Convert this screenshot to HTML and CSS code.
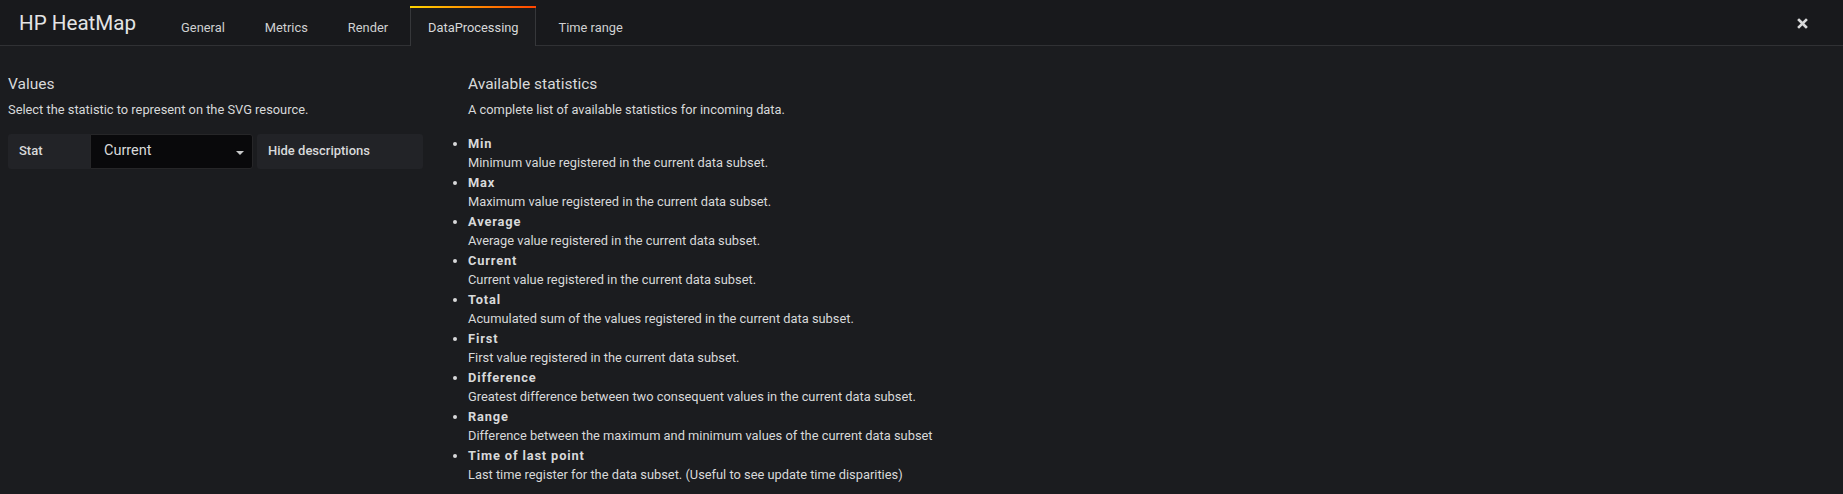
FILE: index.html
```html
<!DOCTYPE html>
<html lang="en">
<head>
<meta charset="utf-8">
<title>HP HeatMap</title>
<link rel="stylesheet" href="styles.css">
</head>
<body>
<div class="editor">
  <header class="tabs-header">
    <h2 class="title">HP HeatMap</h2>
    <ul class="tabs">
      <li class="tab">General</li>
      <li class="tab">Metrics</li>
      <li class="tab">Render</li>
      <li class="tab active">DataProcessing</li>
      <li class="tab">Time range</li>
    </ul>
    <button class="close" aria-label="Close">
      <svg width="11" height="11" viewBox="0 0 11 11"><path d="M2 2 L9 9 M9 2 L2 9" stroke="#d8d9da" stroke-width="2.6" stroke-linecap="square" fill="none"/></svg>
    </button>
  </header>
  <div class="content">
    <section class="group values">
      <h5 class="section-heading">Values</h5>
      <p class="section-desc">Select the statistic to represent on the SVG resource.</p>
      <div class="form-row">
        <span class="form-label">Stat</span>
        <div class="select">
          <span class="select-value">Current</span>
          <span class="caret"></span>
        </div>
        <span class="form-label wide">Hide descriptions</span>
      </div>
    </section>
    <section class="group stats">
      <h5 class="section-heading">Available statistics</h5>
      <p class="section-desc">A complete list of available statistics for incoming data.</p>
      <ul class="stat-list">
        <li><strong>Min</strong><span>Minimum value registered in the current data subset.</span></li>
        <li><strong>Max</strong><span>Maximum value registered in the current data subset.</span></li>
        <li><strong>Average</strong><span>Average value registered in the current data subset.</span></li>
        <li><strong>Current</strong><span>Current value registered in the current data subset.</span></li>
        <li><strong>Total</strong><span>Acumulated sum of the values registered in the current data subset.</span></li>
        <li><strong>First</strong><span>First value registered in the current data subset.</span></li>
        <li><strong>Difference</strong><span>Greatest difference between two consequent values in the current data subset.</span></li>
        <li><strong>Range</strong><span>Difference between the maximum and minimum values of the current data subset</span></li>
        <li><strong>Time of last point</strong><span>Last time register for the data subset. (Useful to see update time disparities)</span></li>
      </ul>
    </section>
  </div>
</div>
</body>
</html>
```

FILE: styles.css
```css
* { box-sizing: border-box; }
html, body {
  margin: 0;
  padding: 0;
  background: #1b1c1f;
  color: #d8d9da;
  font-family: Roboto, "Liberation Sans", sans-serif;
  font-size: 12.85px;
  line-height: 1.5;
}
.editor { min-height: 494px; }
.tabs-header {
  display: flex;
  align-items: flex-end;
  height: 46px;
  background: #18191c;
  border-bottom: 1px solid #303134;
}
.title {
  margin: 0 0 0 19px;
  align-self: center;
  font-size: 20.6px;
  font-weight: 400;
  line-height: 1;
  color: #e3e4e5;
  padding-top: 1px;
}
.tabs {
  display: flex;
  gap: 5px;
  list-style: none;
  margin: 0 0 -1px 27px;
  padding: 0;
}
.tab {
  height: 40px;
  padding: 11px 16px 0 17px;
  font-size: 12.85px;
  line-height: 20px;
  color: #d0d1d2;
  border: 1px solid transparent;
  border-bottom: 0;
}
.tab.active {
  position: relative;
  background: #1b1c1f;
  border-color: #36373a;
  color: #d8d9da;
}
.tab.active::before {
  content: "";
  position: absolute;
  left: -1px;
  right: -1px;
  top: -1px;
  height: 2px;
  background: linear-gradient(to right, #ffd500, #ff4400);
}
.close {
  margin: 2px 35px 0 auto;
  align-self: center;
  background: none;
  border: 0;
  padding: 0;
  width: 11px;
  height: 11px;
  display: flex;
}
.content {
  display: grid;
  grid-template-columns: 460px 1fr;
  padding: 0 0 0 8px;
}
.section-heading {
  margin: 0;
  padding-top: 27px;
  font-size: 15.5px;
  font-weight: 400;
  line-height: 22px;
  color: #d8d9da;
}
.section-desc {
  margin: 5px 0 0;
  line-height: 19.5px;
}
.form-row {
  display: flex;
  margin-top: 14px;
  height: 35px;
}
.form-label {
  display: flex;
  align-items: center;
  width: 82px;
  padding-left: 11px;
  background: #222327;
  border-radius: 3px 0 0 3px;
  font-weight: 500;
  font-size: 13px;
  color: #d8d9da;
}
.form-label.wide {
  width: 166px;
  margin-left: 4px;
  border-radius: 3px;
}
.select {
  position: relative;
  width: 163px;
  display: flex;
  align-items: center;
  background: #09090b;
  border: 1px solid #262628;
  border-radius: 0 3px 3px 0;
  padding-left: 13px;
}
.select-value { font-size: 14.5px; color: #d8d9da; }
.caret {
  position: absolute;
  right: 8px;
  top: 16px;
  width: 0;
  height: 0;
  border-left: 4px solid transparent;
  border-right: 4px solid transparent;
  border-top: 4px solid #c8c9ca;
}
.stat-list {
  margin: 14px 0 0;
  padding: 0;
  list-style: disc outside;
}
.stat-list li {
  line-height: 19.5px;
  margin-bottom: 0;
}
.stat-list li::marker { font-size: 14px; }
.stat-list strong {
  display: block;
  font-weight: 700;
  letter-spacing: 0.85px;
  color: #d8d9da;
}
.stat-list span { display: block; }
```
